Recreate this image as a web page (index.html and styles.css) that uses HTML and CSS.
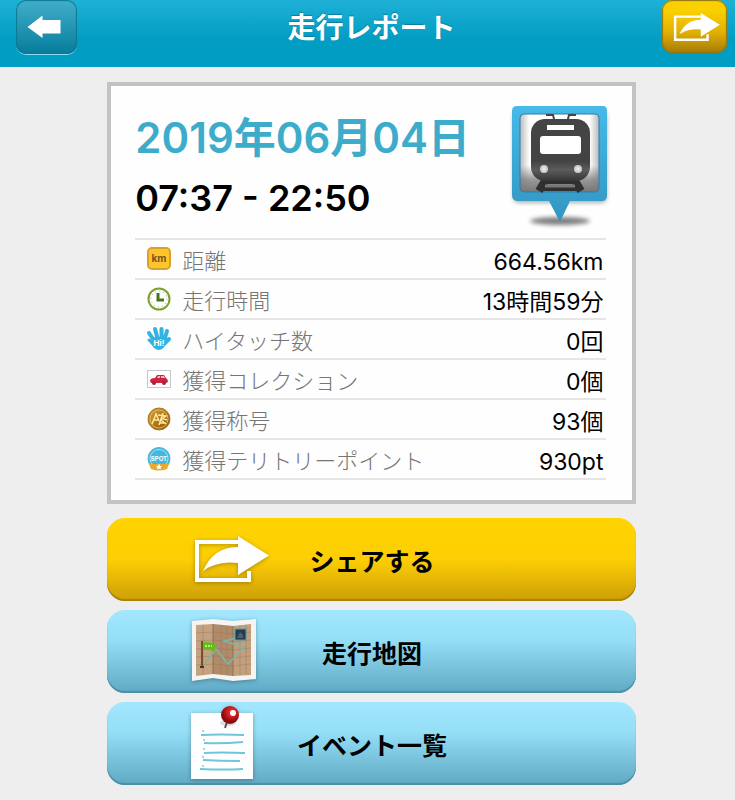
FILE: index.html
```html
<!DOCTYPE html>
<html lang="ja">
<head>
<meta charset="utf-8">
<meta name="viewport" content="width=device-width, initial-scale=1">
<title>走行レポート</title>
<link rel="stylesheet" href="styles.css">
</head>
<body>
<header class="bar">
  <button class="bar-button back" type="button" aria-label="戻る">
    <svg width="40" height="24" viewBox="0 0 40 24"><path d="M0.500 12L15.500 0.500V5H33.500V18.500H15.500V23Z" fill="#fff"/></svg>
  </button>
  <h1 class="bar-title">走行レポート</h1>
  <button class="bar-button share" type="button" aria-label="シェア">
    <svg width="52" height="30" viewBox="-7 0 85 48"><path d="M45 7H3V45H56V36" fill="none" stroke="#fff" stroke-width="4"/><path d="M45 1L76 20.500L45 40V28C30 26 18 30 10 36C17 20 28 12 45 12Z" fill="#fff"/></svg>
  </button>
</header>

<main class="page">
  <section class="card">
    <div class="summary">
      <div class="when">
        <h2 class="date">2019年06月04日</h2>
        <p class="time">07:37 - 22:50</p>
      </div>
      <svg class="pin" width="98" height="126" viewBox="0 0 98 126" aria-hidden="true">
        <defs>
          <linearGradient id="frame" x2="0" y2="1"><stop stop-color="#46bae8"/><stop offset="1" stop-color="#3295c2"/></linearGradient>
          <linearGradient id="ground" x2="0" y2="1"><stop stop-color="#fff"/><stop offset=".66" stop-color="#fff"/><stop offset=".84" stop-color="#999"/><stop offset="1" stop-color="#777"/></linearGradient>
          <linearGradient id="side"><stop stop-color="#777" stop-opacity=".5"/><stop offset=".12" stop-color="#777" stop-opacity="0"/><stop offset=".88" stop-color="#777" stop-opacity="0"/><stop offset="1" stop-color="#777" stop-opacity=".5"/></linearGradient>
          <linearGradient id="train" x2="0" y2="1"><stop stop-color="#454545"/><stop offset=".68" stop-color="#434343"/><stop offset=".82" stop-color="#5c5c5c"/><stop offset="1" stop-color="#353535"/></linearGradient>
          <radialGradient id="lamp"><stop stop-color="#eee"/><stop offset="1" stop-color="#c4c4c4"/></radialGradient>
          <filter id="soft" x="-30%" y="-100%" width="160%" height="300%"><feGaussianBlur stdDeviation="2"/></filter>
        </defs>
        <rect x="5" y="7" width="94" height="93" rx="6" opacity=".3" filter="url(#soft)"/>
        <ellipse cx="52" cy="118" rx="30" ry="4" fill="#555" opacity=".75" filter="url(#soft)"/>
        <path d="M9 3H95Q99 3 99 8V92Q99 98 94 98H62L52 119L41 98H10Q4 98 4 92V8Q4 3 9 3Z" fill="url(#frame)"/>
        <rect x="12" y="11" width="79" height="78" rx="4" fill="url(#ground)"/>
        <rect x="12" y="11" width="79" height="78" rx="4" fill="url(#side)" stroke="#2c7fa6"/>
        <path d="M38 12H45L47 20M68 12H61L59 20" fill="none" stroke="#454545" stroke-width="2"/>
        <path d="M38 76L31 88M66 76L73 88" stroke="#303030" stroke-width="8"/>
        <path d="M38 79H66M34 86H70" stroke="#303030" stroke-width="4"/>
        <path d="M37 83H67" stroke="#777" stroke-width="3"/>
        <rect x="23" y="16" width="59" height="62" rx="14" fill="url(#train)"/>
        <rect x="39" y="22" width="27" height="5" fill="#fff"/>
        <rect x="32" y="33" width="41" height="18" rx="3" fill="#fff"/>
        <circle cx="36" cy="66" r="4" fill="url(#lamp)"/><circle cx="70" cy="66" r="4" fill="url(#lamp)"/>
      </svg>
    </div>

    <table class="stats">
      <tbody>
      <tr>
        <td class="icon"><svg width="26" height="26" viewBox="0 0 26 26" aria-hidden="true"><rect x="2" y="2" width="22" height="21" rx="4" fill="#fdc52b" stroke="#d9a12b" stroke-width="2"/><text class="km" x="13" y="16" text-anchor="middle">km</text></svg></td>
        <th scope="row">距離</th><td class="value">664.56km</td>
      </tr>
      <tr>
        <td class="icon"><svg width="26" height="26" viewBox="0 0 26 26" aria-hidden="true"><circle cx="13" cy="13" r="10.500" fill="#fff" stroke="#7f9f2f" stroke-width="2"/><circle cx="13" cy="13" r="8" fill="none" stroke="#99a56c" stroke-dasharray="1 3.200"/><path d="M12 7V14H18" fill="none" stroke="#46761c" stroke-width="3"/></svg></td>
        <th scope="row">走行時間</th><td class="value">13時間59分</td>
      </tr>
      <tr>
        <td class="icon"><svg width="26" height="26" viewBox="0 0 26 26" aria-hidden="true"><path d="M3 7L9 16M9 3L12 14M15.500 3V14M21 5L18 15M23 13L18 18" stroke="#31b4e2" stroke-width="4" stroke-linecap="round"/><path d="M6 12Q13 9 20 13L19 20Q14 27 8 22L3 15Z" fill="#31b4e2"/><path d="M3 14L8 19" stroke="#31b4e2" stroke-width="3" stroke-linecap="round"/><text class="hi" x="13" y="20" text-anchor="middle">Hi!</text></svg></td>
        <th scope="row">ハイタッチ数</th><td class="value">0回</td>
      </tr>
      <tr>
        <td class="icon"><svg width="26" height="26" viewBox="0 0 26 26" aria-hidden="true"><rect x="1.500" y="4.500" width="23" height="17" fill="#fff" stroke="#c8c8cc"/><path d="M4 15Q4 12 9 12L11 9H18L20 12Q22 13 22 16L20 17H5Z" fill="#cc2442"/><path d="M11 12L12 10H14V12M15 12V10H18L19 12" fill="#f2b5bd"/><circle cx="8" cy="17" r="2" fill="#b0203a"/><circle cx="18" cy="17" r="2" fill="#b0203a"/></svg></td>
        <th scope="row">獲得コレクション</th><td class="value">0個</td>
      </tr>
      <tr>
        <td class="icon"><svg width="26" height="26" viewBox="0 0 26 26" aria-hidden="true"><defs><linearGradient id="gold" x2="1" y2="1"><stop stop-color="#d2a13c"/><stop offset=".5" stop-color="#b57b17"/><stop offset="1" stop-color="#7c4e0d"/></linearGradient></defs><circle cx="13" cy="13" r="11" fill="url(#gold)" stroke="#a67a2b" stroke-width="1"/><circle cx="13" cy="13" r="9" fill="none" stroke="#e1b958"/><path d="M6 18L10 8L13 15M8 14H12M12 9L20 10L15 14L20 18M17 7L13 19M15 12L21 14M13 17H20" fill="none" stroke="#ffe6a0" stroke-width="1.500"/></svg></td>
        <th scope="row">獲得称号</th><td class="value">93個</td>
      </tr>
      <tr>
        <td class="icon"><svg width="26" height="26" viewBox="0 0 26 26" aria-hidden="true"><circle cx="13" cy="12.500" r="11" fill="#40b9dd" stroke="#52b5d2"/><circle cx="13" cy="12.500" r="9" fill="none" stroke="#a7e3f2"/><path d="M3 18H23L21 23Q13 26 5 23Z" fill="#e8aa2a"/><path d="M13 17.500L14 20H16L14.500 21.500L15 23.500L13 22.500L11 23.500L11.500 21.500L10 20H12Z" fill="#fff"/><text class="spot" x="13" y="15" text-anchor="middle">SPOT</text></svg></td>
        <th scope="row">獲得テリトリーポイント</th><td class="value">930pt</td>
      </tr>
      </tbody>
    </table>
  </section>

  <nav class="actions">
    <button class="action gold" type="button">
      <svg width="80" height="50" viewBox="-3 0 80 50" aria-hidden="true"><path d="M45 7H4V45H56V36" fill="none" stroke="#fff" stroke-width="4"/><path d="M45 1L76 20.500L45 40V28C30 26 18 30 10 36C17 20 28 12 45 12Z" fill="#fff"/></svg>
      <span>シェアする</span>
    </button>
    <button class="action" type="button">
      <svg width="68" height="68" viewBox="0 1 68 68" aria-hidden="true">
        <path d="M2 4L23 2L43 4L66 2V62L43 64L23 61L2 64Z" fill="#f4f4f2"/>
        <path d="M6 8L23 7V57L6 59Z" fill="#c5a27f"/><path d="M23 7L43 9V59L23 57Z" fill="#b08b69"/><path d="M43 9L61 7V58L43 59Z" fill="#c2a07e"/>
        <path d="M6 16L23 15L43 17L61 15M6 24L23 23L43 25L61 23M6 32L23 31L43 33L61 31M6 40L23 39L43 41L61 39M6 48L23 47L43 49L61 47M13 8V58M31 8V58M37 9V58M50 8V58M56 8V58" fill="none" stroke="#96755b" stroke-opacity=".45"/>
        <path d="M23 7V57M43 9V59" stroke="#8f6f55" stroke-opacity=".5" stroke-width="2"/>
        <path d="M15 46L26 32L38 47L54 30L34 24L50 20" fill="none" stroke="#7db6a7" stroke-width="1.500"/>
        <rect x="45" y="12" width="11" height="11" fill="#263d50" stroke="#4a9dba"/><path d="M47 21L50 15L53 18V21" fill="#4d6170"/>
        <path d="M12 25H19L25 27V34L19 33H12Z" fill="#64bd1b"/><path d="M15 29H22" stroke="#b9ec7c" stroke-width="2" stroke-dasharray="2 1"/>
        <path d="M12 24V50" stroke="#765027" stroke-width="2"/><path d="M10 50H14" stroke="#4d3320" stroke-width="2"/>
      </svg>
      <span>走行地図</span>
    </button>
    <button class="action" type="button">
      <svg width="68" height="78" viewBox="0 1 68 78" aria-hidden="true">
        <defs><radialGradient id="ball" cx=".6" cy=".35"><stop stop-color="#ec3838"/><stop offset=".6" stop-color="#c91a1d"/><stop offset="1" stop-color="#8c0b10"/></radialGradient></defs>
        <path d="M1 9H63V75H1Z" fill="#fefefe"/>
        <path d="M11 31Q30 30 54 31M14 39Q32 40 53 38M14 49Q30 48 55 49M13 56Q30 57 50 57M10 65Q34 66 53 65" fill="none" stroke="#6fc6da" stroke-width="2"/>
        <path d="M13 26V28M14 35V37M14 44V46M13 52V54M13 61V63" stroke="#9ad9e7" stroke-width="2"/>
        <ellipse cx="38" cy="19" rx="8" ry="3" fill="#777" opacity=".25"/>
        <path d="M37 18L35 24" stroke="#555" stroke-width="2"/><circle cx="40" cy="11" r="9" fill="url(#ball)"/><circle cx="43" cy="9" r="3" fill="#fff"/>
      </svg>
      <span>イベント一覧</span>
    </button>
  </nav>
</main>
</body>
</html>
```

FILE: styles.css
```css
* { box-sizing: border-box; }

body {
  margin: 0;
  background: #eee;
  color: #000;
  font-family: Inter, "Noto Sans CJK JP", sans-serif;
}

button {
  padding: 0;
  border: 0;
  font: inherit;
  color: inherit;
}

svg {
  display: block;
  overflow: visible;
}

.bar {
  display: grid;
  grid-template-columns: 1fr auto 1fr;
  align-items: start;
  padding: 0 8px 11px 16px;
  background: linear-gradient(#1fb0d6, #029dc3 60%);
}

.bar-title {
  margin: 0;
  color: #fff;
  font-size: 28px;
  line-height: 56px;
  font-weight: 600;
  text-shadow: 0 -1px 1px #0a7d9c;
}

.bar-button {
  display: grid;
  place-items: center;
  height: 54px;
  border-radius: 10px;
}

.back {
  width: 61px;
  background: linear-gradient(#41aecb, #067d9b);
  box-shadow: inset 0 0 1px 1px #0d7893, 0 1px 0 #8fdced;
}

.share {
  width: 65px;
  height: 53px;
  justify-self: end;
  background: linear-gradient(#fbd000 20%, #e2b103 60%, #a67a08);
  box-shadow: inset 0 0 1px 1px #8d7415;
}

.page {
  width: 72%;
  margin: 15px 0 0 14.6%;
}

.card {
  padding: 17px 26px 20px 24px;
  border: 4px solid #c3c3c3;
  background: #fefefe;
}

.summary {
  display: flex;
  justify-content: space-between;
  height: 135px;
}

.date,
.time {
  margin: 0;
  font-weight: 600;
  white-space: nowrap;
}

.date {
  color: #3daccb;
  font-size: 42px;
  line-height: 70px;
}

.time {
  font-size: 36px;
  line-height: 50px;
}

.pin { flex: none; }

.stats {
  width: 100%;
  border-collapse: collapse;
  border-top: 2px solid #e6e6e6;
}

.stats tr {
  height: 40px;
  border-bottom: 2px solid #e6e6e6;
}

.stats td,
.stats th { padding: 0; }

.stats .icon {
  width: 47px;
  padding-left: 11px;
}

.stats th {
  padding-top: 3px;
  color: #757575;
  font-size: 22px;
  line-height: 32px;
  font-weight: 300;
  text-align: left;
  white-space: nowrap;
}

.stats .value {
  padding: 6px 3px 0 0;
  font-size: 23px;
  line-height: 32px;
  text-align: right;
  white-space: nowrap;
}

.km,
.hi,
.spot { font-weight: 700; }

.km { fill: #76521a; font-size: 10px; }
.hi { fill: #fff; font-size: 8px; }
.spot { fill: #fff; font-size: 6px; }

.actions {
  display: grid;
  gap: 9px;
  margin-top: 14px;
}

.action {
  display: grid;
  grid-template-columns: 1fr auto 1fr;
  align-items: center;
  height: 83px;
  border-radius: 18px;
  background: linear-gradient(#a2e7fe, #95dff7 35%, #5fa9c4);
  box-shadow: inset 0 -2px 1px #4a8fa6;
  font-size: 25px;
  font-weight: 700;
}

.action svg {
  margin-left: 83px;
  filter: drop-shadow(0 1px 2px rgb(0 0 0 / 30%));
}

.gold {
  background: linear-gradient(#ffd400, #fdce04 50%, #cc9e08);
  box-shadow: inset 0 -2px 1px #a98208;
}
```
